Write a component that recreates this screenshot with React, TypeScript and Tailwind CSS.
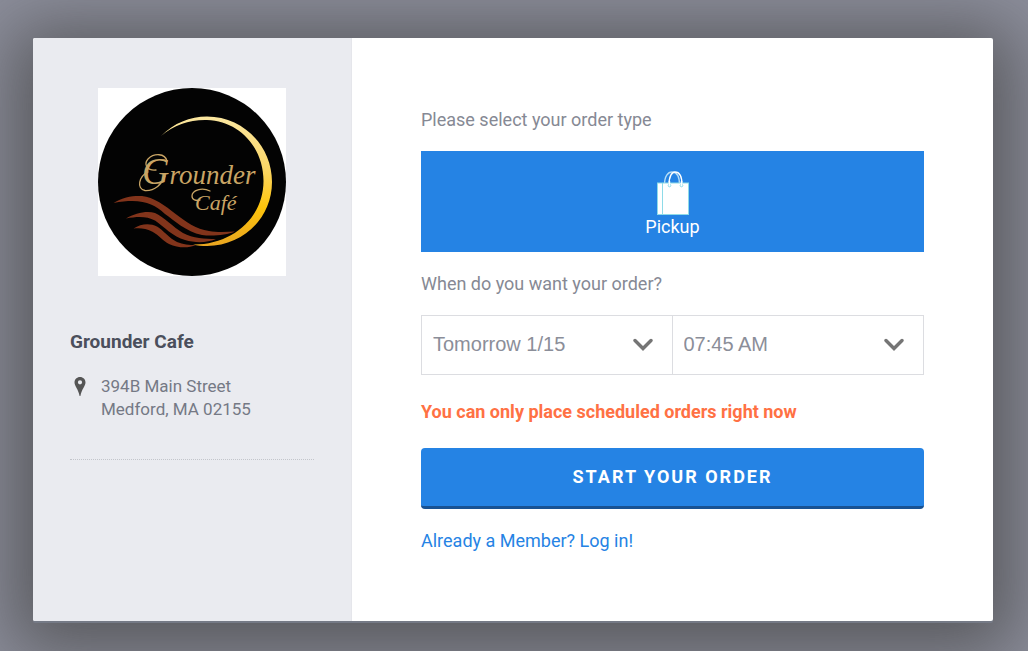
import { useState } from "react";

const days = ["Tomorrow 1/15", "Thursday 1/16", "Friday 1/17"];
const times = ["07:45 AM", "08:00 AM", "08:15 AM", "08:30 AM"];

const CafeLogo = () => (
  <svg
    viewBox="0 0 188 188"
    className="w-[188px] h-[188px] mx-auto bg-white"
    role="img"
    aria-label="Grounder Café"
  >
    <defs>
      <linearGradient id="gold" x1="0" y1="0" x2="0" y2="1">
        <stop offset="0" stopColor="#fbe7a0" />
        <stop offset="0.4" stopColor="#fbd667" />
        <stop offset="0.7" stopColor="#fdc40c" />
        <stop offset="1" stopColor="#e9a520" />
      </linearGradient>
    </defs>
    <circle cx="94" cy="94" r="94" fill="#030303" />
    {/* Crescent */}
    <path
      d="M63 48 C76 35 92 28.500 109 28.500 C145 28.500 174 58 174 94 C174 130 145 158 109 158 C104 158 99 157.500 95 156.500 C134 157 165.500 130 165.500 93 C165.500 59 141 33 109 32 C92 31.500 76 37 63 48 Z"
      fill="url(#gold)"
    />
    {/* Steam waves */}
    <g fill="#82341b">
      <path d="M15.500 115 C25 109 35 107.500 44 108 C55 109 68 118 77 125.500 C89 134.500 98 141 111 143 C119 144.500 128 144 137 143.500 C129 147 114 148.500 104 147 C88 144 76 132 67 126 C55 115 43 110 15.500 115 Z" />
      <path d="M28 130.500 C37 125 49 122.500 57 125 C66 129 75 139 85 145 C95 150.500 107 151 118 151 C109 155 97 155 87 152 C75 148.500 66 139 57 132.500 C49 128.500 41 128 28 130.500 Z" />
      <path d="M35.500 140.500 C43 135.500 52 135 59 138.500 C65 142 71 150 79 154 C85 156.500 91 157 98 157 C90 160.500 80 160 71 156 C65 153 61 147 54 143.500 C48 140.500 43 140 35.500 140.500 Z" />
    </g>
    <g
      fill="#c9a565"
      fontFamily="'Liberation Serif', serif"
      fontStyle="italic"
    >
      <text x="44" y="96" fontSize="27">
        <tspan fontSize="38">G</tspan>rounder
      </text>
      <text x="97" y="122" fontSize="22">Café</text>
    </g>
    {/* Flourishes beside the capitals */}
    <g fill="none" stroke="#c9a565" strokeWidth="1.300" strokeLinecap="round">
      <path d="M69 73 C67 65 56 65 50 71 C45 77 50 83 58 82" />
      <path d="M50 84 C41 88 38 101 47 102.500 C57 103 64 96 67 88" />
      <path d="M112 103 C104 99 94 102 94 108 C94 112 98 113 102 112" />
    </g>
  </svg>
);

const PinIcon = () => (
  <svg viewBox="0 0 12 19" className="w-3 h-[19px]" aria-hidden="true">
    <path
      d="M6 0 C2.900 0 0.500 2.300 0.500 5.500 C0.500 9 4.300 12 5.600 19 H6.400 C7.700 12 11.500 9 11.500 5.500 C11.500 2.300 9.100 0 6 0 Z M6 3.200 A2.100 2.100 0 1 1 6 7.400 A2.100 2.100 0 1 1 6 3.200 Z"
      fill="#555"
      fillRule="evenodd"
    />
  </svg>
);

const BagIcon = () => (
  <svg viewBox="0 0 32 44" className="w-8 h-11" aria-hidden="true">
    <g fill="none" strokeWidth="1.400">
      <path d="M7.500 14 C7.500 5 11 1 15 1 C20 1 22.500 5 22.500 14" stroke="#b5dcf5" />
      <path d="M12 14 C12 5 15 1 18 1 C22 1 25 5 25 14" stroke="#fff" />
    </g>
    <rect x="0.500" y="12" width="31" height="31.500" fill="#fff" stroke="#8edbe8" />
    <path d="M5.500 12 V43" stroke="#8edbe8" />
    <g fill="none" stroke="#8edbe8">
      <circle cx="12.500" cy="14.500" r="1.300" />
      <circle cx="24.500" cy="14.500" r="1.300" />
    </g>
    <path d="M12.500 14 V10 M24.500 14 V10" stroke="#fff" strokeWidth="1.400" />
  </svg>
);

const SelectBox = ({ label, options }: { label: string; options: string[] }) => {
  const [value, setValue] = useState(options[0]);

  return (
    <div className="relative">
      <select
        aria-label={label}
        value={value}
        onChange={(e) => setValue(e.target.value)}
        className="block w-full h-[58px] pl-[11px] pr-12 pb-0.5 appearance-none bg-white text-[20px] text-[#8b8e99] font-['Liberation_Sans',sans-serif]"
      >
        {options.map((option) => (
          <option key={option}>{option}</option>
        ))}
      </select>
      <svg
        viewBox="0 0 20 14"
        className="absolute right-[19px] top-[22px] w-5 h-3.5 pointer-events-none"
        aria-hidden="true"
      >
        <path
          d="M2 2.500 L10 10.500 L18 2.500"
          fill="none"
          stroke="#757575"
          strokeWidth="3.400"
          strokeLinecap="round"
        />
      </svg>
    </div>
  );
};

export default function App() {
  return (
    <div className="min-h-screen pt-[38px] pb-[29px] pl-[33px] pr-[35px] bg-[#8c8e9b] overflow-hidden text-[18px] leading-6 text-[#868994] font-[Roboto,sans-serif]">
      <div className="flex max-w-[960px] mx-auto rounded-xs bg-white shadow-[0_2px_0_#757a86,0_10px_70px_20px_rgba(66,66,66,0.7)]">
        {/* Restaurant info */}
        <aside className="w-[319px] shrink-0 pt-[50px] px-[37px] rounded-l-xs bg-[#eaebf0] border-r border-[#e5e6eb]">
          <CafeLogo />
          <h1 className="mt-[54px] text-[19px] font-bold text-[#4b4f5c]">
            Grounder Cafe
          </h1>
          <div className="flex gap-[15px] mt-[21px] pb-[38px] pl-1 border-b border-dotted border-[#c3c5cb]">
            <div className="pt-0.5">
              <PinIcon />
            </div>
            <address className="not-italic text-[17px] leading-[23px] text-[#757985]">
              394B Main Street
              <br />
              Medford, MA 02155
            </address>
          </div>
        </aside>

        {/* Order form */}
        <main className="flex-1 pt-[70px] pb-[68px] px-[69px]">
          <p>Please select your order type</p>
          <button
            type="button"
            className="flex flex-col items-center w-full mt-[19px] pt-5 pb-[13px] bg-[#2583e4] text-white"
          >
            <BagIcon />
            Pickup
          </button>
          <p className="mt-5">When do you want your order?</p>
          <div className="grid grid-cols-2 mt-[19px] border border-[#dcdde1] divide-x divide-[#dcdde1]">
            <SelectBox label="Order day" options={days} />
            <SelectBox label="Order time" options={times} />
          </div>
          <p className="mt-[25px] font-bold text-[#ff7144]">
            You can only place scheduled orders right now
          </p>
          <button
            type="button"
            className="w-full h-[61px] mt-6 rounded-[4px] border-b-3 border-[#185293] bg-[#2583e4] font-bold tracking-[2px] text-white"
          >
            START YOUR ORDER
          </button>
          <a href="#login" className="inline-block mt-5 text-[#2583e4]">
            Already a Member? Log in!
          </a>
        </main>
      </div>
    </div>
  );
}
